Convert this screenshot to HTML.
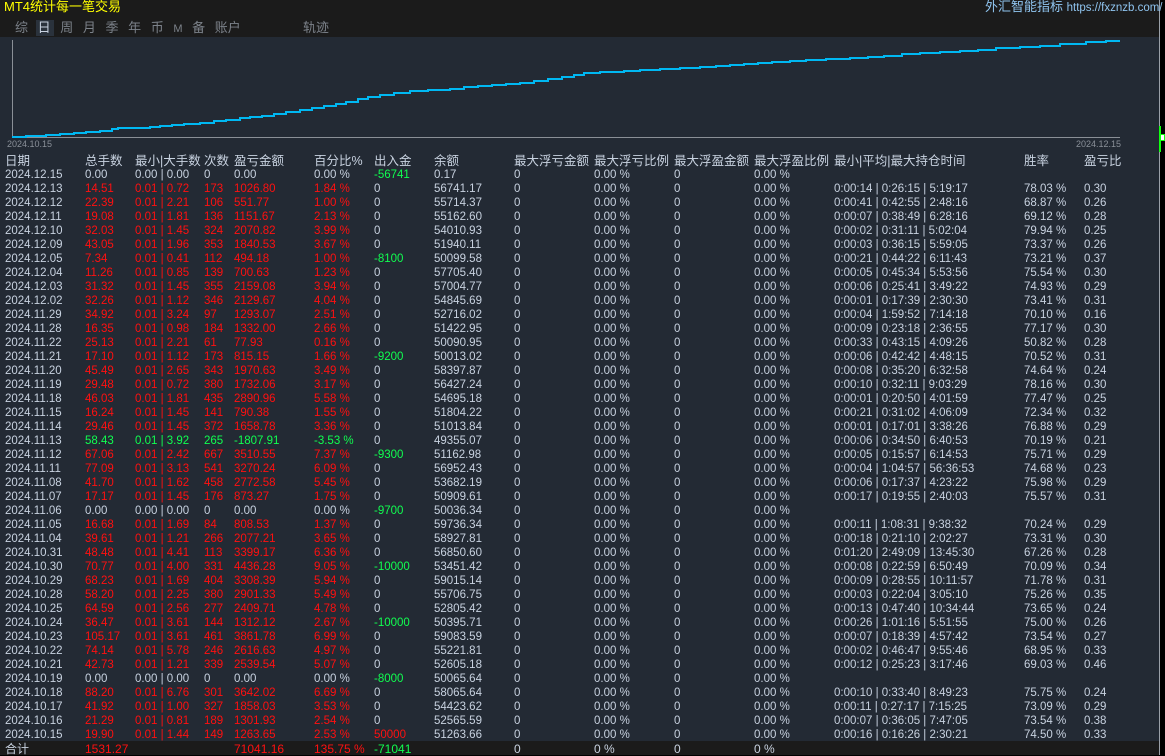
<!DOCTYPE html>
<html><head><meta charset="utf-8"><style>
body{margin:0;width:1165px;height:755px;background:#000;overflow:hidden;font-family:"Liberation Sans","Noto Sans CJK SC",sans-serif;}
#top{position:absolute;left:0;top:0;width:1159px;height:37px;background:#1b1b1b;}
#main{position:absolute;left:0;top:37px;width:1159px;height:708px;background:#232a34;}
#foot{position:absolute;left:0;top:741px;width:1159px;height:14px;background:#1b1b1b;}
#vl{position:absolute;left:1159px;top:0;width:1px;height:755px;background:#9aa0a8;}
.t{position:absolute;white-space:nowrap;font-size:12px;line-height:14px;color:#c8d2e0;}
.r{position:absolute;left:0;height:14px;width:1159px;font-size:11.5px;line-height:14px;color:#c8d2e0;}
.r span{position:absolute;white-space:nowrap;top:0}
.red span.c{color:#ff1010}
.grn span.c{color:#10ff50}
.g{color:#10ff50!important}.rd{color:#ff1010!important}
.a{left:5px}.b{left:85px}.c1{left:135px}.d{left:204px}.e{left:234px}.f{left:314px}.g1{left:374px}.h{left:434px}.i{left:514px}.j{left:594px}.k{left:674px}.l{left:754px}.m{left:834px}.n{left:1024px}.o{left:1084px}
</style></head><body>
<div id="top"></div><div id="main"></div><div id="foot"></div><div id="vl"></div>
<div style="position:absolute;left:1159px;top:126px;width:2px;height:26px;background:#10ff10"></div>
<div style="position:absolute;left:1160px;top:134px;width:3px;height:5px;background:#fff;border:1px solid #10ff10"></div>
<div class="t" style="left:4px;top:0;color:#ffff00;font-size:13px">MT4统计每一笔交易</div>
<div class="t" style="left:985px;top:0;color:#8fc4ef;font-size:13px">外汇智能指标 <span style="font-size:11.5px">https://fxznzb.com/</span></div>
<div style="position:absolute;left:36px;top:20px;width:18px;height:16px;background:#2a323c"></div>
<div class="t" style="left:15px;top:21px;color:#7c828a;font-size:13px;word-spacing:6px">综 <span style="color:#c8d2e0">日</span> 周 月 季 年 币 <span style="font-size:11px">M</span> 备 账户</div>
<div class="t" style="left:303px;top:21px;color:#7c828a;font-size:13px">轨迹</div>
<svg style="position:absolute;left:0;top:37px" width="1159" height="120">
<line x1="12.5" y1="3" x2="12.5" y2="100" stroke="#8a8f96"/>
<line x1="12" y1="100.5" x2="1120" y2="100.5" stroke="#8a8f96"/>
<polyline fill="none" stroke="#00b8f2" stroke-width="2" points="12,100 26,100 26,99 46,99 46,98 60,98 60,97 74,97 74,96 86,96 86,95 100,95 100,94 112,94 112,92 118,92 118,91 150,91 150,90 160,90 160,89 172,89 172,88 184,88 184,87 200,87 200,86 214,86 214,84 226,84 226,83 240,83 240,81 250,81 250,80 262,80 262,79 274,79 274,77 286,77 286,75 300,75 300,73 312,73 312,71 324,71 324,69 336,69 336,67 346,67 346,65 358,65 358,62 368,62 368,60 380,60 380,58 394,58 394,56 410,56 410,54 428,54 428,53 450,53 450,52 464,52 464,50 478,50 478,49 492,49 492,48 506,48 506,47 520,47 520,46 534,46 534,44 548,44 548,42 562,42 562,40 574,40 574,38 584,38 584,36 600,36 600,35 624,35 624,34 640,34 640,33 660,33 660,32 680,32 680,31 700,31 700,30 716,30 716,29 730,29 730,28 744,28 744,27 758,27 758,26 772,26 772,25 790,25 790,24 806,24 806,23 826,23 826,22 850,22 850,21 868,21 868,20 884,20 884,19 902,19 902,17 920,17 920,16 940,16 940,15 960,15 960,14 978,14 978,13 996,13 996,11 1020,11 1020,10 1040,10 1040,9 1060,9 1060,7 1086,7 1086,5 1106,5 1106,4 1120,4"/>
</svg>
<div class="t" style="left:7px;top:138px;font-size:9px;line-height:12px;color:#8a9099">2024.10.15</div>
<div class="t" style="left:1076px;top:138px;font-size:9px;line-height:12px;color:#8a9099">2024.12.15</div>
<div class="r" style="top:154px;font-size:12.5px"><span class="a">日期</span><span class="b">总手数</span><span class="c1">最小|大手数</span><span class="d">次数</span><span class="e">盈亏金额</span><span class="f">百分比%</span><span class="g1">出入金</span><span class="h">余额</span><span class="i">最大浮亏金额</span><span class="j">最大浮亏比例</span><span class="k">最大浮盈金额</span><span class="l">最大浮盈比例</span><span class="m">最小|平均|最大持仓时间</span><span class="n">胜率</span><span class="o">盈亏比</span></div>
<div class="r" style="top:168px"><span class="a">2024.12.15</span><span class="b">0.00</span><span class="c1">0.00 | 0.00</span><span class="d">0</span><span class="e">0.00</span><span class="f">0.00 %</span><span class="g1 g">-56741</span><span class="h">0.17</span><span class="i">0</span><span class="j">0.00 %</span><span class="k">0</span><span class="l">0.00 %</span></div>
<div class="r red" style="top:182px"><span class="a">2024.12.13</span><span class="b c">14.51</span><span class="c1 c">0.01 | 0.72</span><span class="d c">173</span><span class="e c">1026.80</span><span class="f c">1.84 %</span><span class="g1">0</span><span class="h">56741.17</span><span class="i">0</span><span class="j">0.00 %</span><span class="k">0</span><span class="l">0.00 %</span><span class="m">0:00:14 | 0:26:15 | 5:19:17</span><span class="n">78.03 %</span><span class="o">0.30</span></div>
<div class="r red" style="top:196px"><span class="a">2024.12.12</span><span class="b c">22.39</span><span class="c1 c">0.01 | 2.21</span><span class="d c">106</span><span class="e c">551.77</span><span class="f c">1.00 %</span><span class="g1">0</span><span class="h">55714.37</span><span class="i">0</span><span class="j">0.00 %</span><span class="k">0</span><span class="l">0.00 %</span><span class="m">0:00:41 | 0:42:55 | 2:48:16</span><span class="n">68.87 %</span><span class="o">0.26</span></div>
<div class="r red" style="top:210px"><span class="a">2024.12.11</span><span class="b c">19.08</span><span class="c1 c">0.01 | 1.81</span><span class="d c">136</span><span class="e c">1151.67</span><span class="f c">2.13 %</span><span class="g1">0</span><span class="h">55162.60</span><span class="i">0</span><span class="j">0.00 %</span><span class="k">0</span><span class="l">0.00 %</span><span class="m">0:00:07 | 0:38:49 | 6:28:16</span><span class="n">69.12 %</span><span class="o">0.28</span></div>
<div class="r red" style="top:224px"><span class="a">2024.12.10</span><span class="b c">32.03</span><span class="c1 c">0.01 | 1.45</span><span class="d c">324</span><span class="e c">2070.82</span><span class="f c">3.99 %</span><span class="g1">0</span><span class="h">54010.93</span><span class="i">0</span><span class="j">0.00 %</span><span class="k">0</span><span class="l">0.00 %</span><span class="m">0:00:02 | 0:31:11 | 5:02:04</span><span class="n">79.94 %</span><span class="o">0.25</span></div>
<div class="r red" style="top:238px"><span class="a">2024.12.09</span><span class="b c">43.05</span><span class="c1 c">0.01 | 1.96</span><span class="d c">353</span><span class="e c">1840.53</span><span class="f c">3.67 %</span><span class="g1">0</span><span class="h">51940.11</span><span class="i">0</span><span class="j">0.00 %</span><span class="k">0</span><span class="l">0.00 %</span><span class="m">0:00:03 | 0:36:15 | 5:59:05</span><span class="n">73.37 %</span><span class="o">0.26</span></div>
<div class="r red" style="top:252px"><span class="a">2024.12.05</span><span class="b c">7.34</span><span class="c1 c">0.01 | 0.41</span><span class="d c">112</span><span class="e c">494.18</span><span class="f c">1.00 %</span><span class="g1 g">-8100</span><span class="h">50099.58</span><span class="i">0</span><span class="j">0.00 %</span><span class="k">0</span><span class="l">0.00 %</span><span class="m">0:00:21 | 0:44:22 | 6:11:43</span><span class="n">73.21 %</span><span class="o">0.37</span></div>
<div class="r red" style="top:266px"><span class="a">2024.12.04</span><span class="b c">11.26</span><span class="c1 c">0.01 | 0.85</span><span class="d c">139</span><span class="e c">700.63</span><span class="f c">1.23 %</span><span class="g1">0</span><span class="h">57705.40</span><span class="i">0</span><span class="j">0.00 %</span><span class="k">0</span><span class="l">0.00 %</span><span class="m">0:00:05 | 0:45:34 | 5:53:56</span><span class="n">75.54 %</span><span class="o">0.30</span></div>
<div class="r red" style="top:280px"><span class="a">2024.12.03</span><span class="b c">31.32</span><span class="c1 c">0.01 | 1.45</span><span class="d c">355</span><span class="e c">2159.08</span><span class="f c">3.94 %</span><span class="g1">0</span><span class="h">57004.77</span><span class="i">0</span><span class="j">0.00 %</span><span class="k">0</span><span class="l">0.00 %</span><span class="m">0:00:06 | 0:25:41 | 3:49:22</span><span class="n">74.93 %</span><span class="o">0.29</span></div>
<div class="r red" style="top:294px"><span class="a">2024.12.02</span><span class="b c">32.26</span><span class="c1 c">0.01 | 1.12</span><span class="d c">346</span><span class="e c">2129.67</span><span class="f c">4.04 %</span><span class="g1">0</span><span class="h">54845.69</span><span class="i">0</span><span class="j">0.00 %</span><span class="k">0</span><span class="l">0.00 %</span><span class="m">0:00:01 | 0:17:39 | 2:30:30</span><span class="n">73.41 %</span><span class="o">0.31</span></div>
<div class="r red" style="top:308px"><span class="a">2024.11.29</span><span class="b c">34.92</span><span class="c1 c">0.01 | 3.24</span><span class="d c">97</span><span class="e c">1293.07</span><span class="f c">2.51 %</span><span class="g1">0</span><span class="h">52716.02</span><span class="i">0</span><span class="j">0.00 %</span><span class="k">0</span><span class="l">0.00 %</span><span class="m">0:00:04 | 1:59:52 | 7:14:18</span><span class="n">70.10 %</span><span class="o">0.16</span></div>
<div class="r red" style="top:322px"><span class="a">2024.11.28</span><span class="b c">16.35</span><span class="c1 c">0.01 | 0.98</span><span class="d c">184</span><span class="e c">1332.00</span><span class="f c">2.66 %</span><span class="g1">0</span><span class="h">51422.95</span><span class="i">0</span><span class="j">0.00 %</span><span class="k">0</span><span class="l">0.00 %</span><span class="m">0:00:09 | 0:23:18 | 2:36:55</span><span class="n">77.17 %</span><span class="o">0.30</span></div>
<div class="r red" style="top:336px"><span class="a">2024.11.22</span><span class="b c">25.13</span><span class="c1 c">0.01 | 2.21</span><span class="d c">61</span><span class="e c">77.93</span><span class="f c">0.16 %</span><span class="g1">0</span><span class="h">50090.95</span><span class="i">0</span><span class="j">0.00 %</span><span class="k">0</span><span class="l">0.00 %</span><span class="m">0:00:33 | 0:43:15 | 4:09:26</span><span class="n">50.82 %</span><span class="o">0.28</span></div>
<div class="r red" style="top:350px"><span class="a">2024.11.21</span><span class="b c">17.10</span><span class="c1 c">0.01 | 1.12</span><span class="d c">173</span><span class="e c">815.15</span><span class="f c">1.66 %</span><span class="g1 g">-9200</span><span class="h">50013.02</span><span class="i">0</span><span class="j">0.00 %</span><span class="k">0</span><span class="l">0.00 %</span><span class="m">0:00:06 | 0:42:42 | 4:48:15</span><span class="n">70.52 %</span><span class="o">0.31</span></div>
<div class="r red" style="top:364px"><span class="a">2024.11.20</span><span class="b c">45.49</span><span class="c1 c">0.01 | 2.65</span><span class="d c">343</span><span class="e c">1970.63</span><span class="f c">3.49 %</span><span class="g1">0</span><span class="h">58397.87</span><span class="i">0</span><span class="j">0.00 %</span><span class="k">0</span><span class="l">0.00 %</span><span class="m">0:00:08 | 0:35:20 | 6:32:58</span><span class="n">74.64 %</span><span class="o">0.24</span></div>
<div class="r red" style="top:378px"><span class="a">2024.11.19</span><span class="b c">29.48</span><span class="c1 c">0.01 | 0.72</span><span class="d c">380</span><span class="e c">1732.06</span><span class="f c">3.17 %</span><span class="g1">0</span><span class="h">56427.24</span><span class="i">0</span><span class="j">0.00 %</span><span class="k">0</span><span class="l">0.00 %</span><span class="m">0:00:10 | 0:32:11 | 9:03:29</span><span class="n">78.16 %</span><span class="o">0.30</span></div>
<div class="r red" style="top:392px"><span class="a">2024.11.18</span><span class="b c">46.03</span><span class="c1 c">0.01 | 1.81</span><span class="d c">435</span><span class="e c">2890.96</span><span class="f c">5.58 %</span><span class="g1">0</span><span class="h">54695.18</span><span class="i">0</span><span class="j">0.00 %</span><span class="k">0</span><span class="l">0.00 %</span><span class="m">0:00:01 | 0:20:50 | 4:01:59</span><span class="n">77.47 %</span><span class="o">0.25</span></div>
<div class="r red" style="top:406px"><span class="a">2024.11.15</span><span class="b c">16.24</span><span class="c1 c">0.01 | 1.45</span><span class="d c">141</span><span class="e c">790.38</span><span class="f c">1.55 %</span><span class="g1">0</span><span class="h">51804.22</span><span class="i">0</span><span class="j">0.00 %</span><span class="k">0</span><span class="l">0.00 %</span><span class="m">0:00:21 | 0:31:02 | 4:06:09</span><span class="n">72.34 %</span><span class="o">0.32</span></div>
<div class="r red" style="top:420px"><span class="a">2024.11.14</span><span class="b c">29.46</span><span class="c1 c">0.01 | 1.45</span><span class="d c">372</span><span class="e c">1658.78</span><span class="f c">3.36 %</span><span class="g1">0</span><span class="h">51013.84</span><span class="i">0</span><span class="j">0.00 %</span><span class="k">0</span><span class="l">0.00 %</span><span class="m">0:00:01 | 0:17:01 | 3:38:26</span><span class="n">76.88 %</span><span class="o">0.29</span></div>
<div class="r grn" style="top:434px"><span class="a">2024.11.13</span><span class="b c">58.43</span><span class="c1 c">0.01 | 3.92</span><span class="d c">265</span><span class="e c">-1807.91</span><span class="f c">-3.53 %</span><span class="g1">0</span><span class="h">49355.07</span><span class="i">0</span><span class="j">0.00 %</span><span class="k">0</span><span class="l">0.00 %</span><span class="m">0:00:06 | 0:34:50 | 6:40:53</span><span class="n">70.19 %</span><span class="o">0.21</span></div>
<div class="r red" style="top:448px"><span class="a">2024.11.12</span><span class="b c">67.06</span><span class="c1 c">0.01 | 2.42</span><span class="d c">667</span><span class="e c">3510.55</span><span class="f c">7.37 %</span><span class="g1 g">-9300</span><span class="h">51162.98</span><span class="i">0</span><span class="j">0.00 %</span><span class="k">0</span><span class="l">0.00 %</span><span class="m">0:00:05 | 0:15:57 | 6:14:53</span><span class="n">75.71 %</span><span class="o">0.29</span></div>
<div class="r red" style="top:462px"><span class="a">2024.11.11</span><span class="b c">77.09</span><span class="c1 c">0.01 | 3.13</span><span class="d c">541</span><span class="e c">3270.24</span><span class="f c">6.09 %</span><span class="g1">0</span><span class="h">56952.43</span><span class="i">0</span><span class="j">0.00 %</span><span class="k">0</span><span class="l">0.00 %</span><span class="m">0:00:04 | 1:04:57 | 56:36:53</span><span class="n">74.68 %</span><span class="o">0.23</span></div>
<div class="r red" style="top:476px"><span class="a">2024.11.08</span><span class="b c">41.70</span><span class="c1 c">0.01 | 1.62</span><span class="d c">458</span><span class="e c">2772.58</span><span class="f c">5.45 %</span><span class="g1">0</span><span class="h">53682.19</span><span class="i">0</span><span class="j">0.00 %</span><span class="k">0</span><span class="l">0.00 %</span><span class="m">0:00:06 | 0:17:37 | 4:23:22</span><span class="n">75.98 %</span><span class="o">0.29</span></div>
<div class="r red" style="top:490px"><span class="a">2024.11.07</span><span class="b c">17.17</span><span class="c1 c">0.01 | 1.45</span><span class="d c">176</span><span class="e c">873.27</span><span class="f c">1.75 %</span><span class="g1">0</span><span class="h">50909.61</span><span class="i">0</span><span class="j">0.00 %</span><span class="k">0</span><span class="l">0.00 %</span><span class="m">0:00:17 | 0:19:55 | 2:40:03</span><span class="n">75.57 %</span><span class="o">0.31</span></div>
<div class="r" style="top:504px"><span class="a">2024.11.06</span><span class="b">0.00</span><span class="c1">0.00 | 0.00</span><span class="d">0</span><span class="e">0.00</span><span class="f">0.00 %</span><span class="g1 g">-9700</span><span class="h">50036.34</span><span class="i">0</span><span class="j">0.00 %</span><span class="k">0</span><span class="l">0.00 %</span></div>
<div class="r red" style="top:518px"><span class="a">2024.11.05</span><span class="b c">16.68</span><span class="c1 c">0.01 | 1.69</span><span class="d c">84</span><span class="e c">808.53</span><span class="f c">1.37 %</span><span class="g1">0</span><span class="h">59736.34</span><span class="i">0</span><span class="j">0.00 %</span><span class="k">0</span><span class="l">0.00 %</span><span class="m">0:00:11 | 1:08:31 | 9:38:32</span><span class="n">70.24 %</span><span class="o">0.29</span></div>
<div class="r red" style="top:532px"><span class="a">2024.11.04</span><span class="b c">39.61</span><span class="c1 c">0.01 | 1.21</span><span class="d c">266</span><span class="e c">2077.21</span><span class="f c">3.65 %</span><span class="g1">0</span><span class="h">58927.81</span><span class="i">0</span><span class="j">0.00 %</span><span class="k">0</span><span class="l">0.00 %</span><span class="m">0:00:18 | 0:21:10 | 2:02:27</span><span class="n">73.31 %</span><span class="o">0.30</span></div>
<div class="r red" style="top:546px"><span class="a">2024.10.31</span><span class="b c">48.48</span><span class="c1 c">0.01 | 4.41</span><span class="d c">113</span><span class="e c">3399.17</span><span class="f c">6.36 %</span><span class="g1">0</span><span class="h">56850.60</span><span class="i">0</span><span class="j">0.00 %</span><span class="k">0</span><span class="l">0.00 %</span><span class="m">0:01:20 | 2:49:09 | 13:45:30</span><span class="n">67.26 %</span><span class="o">0.28</span></div>
<div class="r red" style="top:560px"><span class="a">2024.10.30</span><span class="b c">70.77</span><span class="c1 c">0.01 | 4.00</span><span class="d c">331</span><span class="e c">4436.28</span><span class="f c">9.05 %</span><span class="g1 g">-10000</span><span class="h">53451.42</span><span class="i">0</span><span class="j">0.00 %</span><span class="k">0</span><span class="l">0.00 %</span><span class="m">0:00:08 | 0:22:59 | 6:50:49</span><span class="n">70.09 %</span><span class="o">0.34</span></div>
<div class="r red" style="top:574px"><span class="a">2024.10.29</span><span class="b c">68.23</span><span class="c1 c">0.01 | 1.69</span><span class="d c">404</span><span class="e c">3308.39</span><span class="f c">5.94 %</span><span class="g1">0</span><span class="h">59015.14</span><span class="i">0</span><span class="j">0.00 %</span><span class="k">0</span><span class="l">0.00 %</span><span class="m">0:00:09 | 0:28:55 | 10:11:57</span><span class="n">71.78 %</span><span class="o">0.31</span></div>
<div class="r red" style="top:588px"><span class="a">2024.10.28</span><span class="b c">58.20</span><span class="c1 c">0.01 | 2.25</span><span class="d c">380</span><span class="e c">2901.33</span><span class="f c">5.49 %</span><span class="g1">0</span><span class="h">55706.75</span><span class="i">0</span><span class="j">0.00 %</span><span class="k">0</span><span class="l">0.00 %</span><span class="m">0:00:03 | 0:22:04 | 3:05:10</span><span class="n">75.26 %</span><span class="o">0.35</span></div>
<div class="r red" style="top:602px"><span class="a">2024.10.25</span><span class="b c">64.59</span><span class="c1 c">0.01 | 2.56</span><span class="d c">277</span><span class="e c">2409.71</span><span class="f c">4.78 %</span><span class="g1">0</span><span class="h">52805.42</span><span class="i">0</span><span class="j">0.00 %</span><span class="k">0</span><span class="l">0.00 %</span><span class="m">0:00:13 | 0:47:40 | 10:34:44</span><span class="n">73.65 %</span><span class="o">0.24</span></div>
<div class="r red" style="top:616px"><span class="a">2024.10.24</span><span class="b c">36.47</span><span class="c1 c">0.01 | 3.61</span><span class="d c">144</span><span class="e c">1312.12</span><span class="f c">2.67 %</span><span class="g1 g">-10000</span><span class="h">50395.71</span><span class="i">0</span><span class="j">0.00 %</span><span class="k">0</span><span class="l">0.00 %</span><span class="m">0:00:26 | 1:01:16 | 5:51:55</span><span class="n">75.00 %</span><span class="o">0.26</span></div>
<div class="r red" style="top:630px"><span class="a">2024.10.23</span><span class="b c">105.17</span><span class="c1 c">0.01 | 3.61</span><span class="d c">461</span><span class="e c">3861.78</span><span class="f c">6.99 %</span><span class="g1">0</span><span class="h">59083.59</span><span class="i">0</span><span class="j">0.00 %</span><span class="k">0</span><span class="l">0.00 %</span><span class="m">0:00:07 | 0:18:39 | 4:57:42</span><span class="n">73.54 %</span><span class="o">0.27</span></div>
<div class="r red" style="top:644px"><span class="a">2024.10.22</span><span class="b c">74.14</span><span class="c1 c">0.01 | 5.78</span><span class="d c">246</span><span class="e c">2616.63</span><span class="f c">4.97 %</span><span class="g1">0</span><span class="h">55221.81</span><span class="i">0</span><span class="j">0.00 %</span><span class="k">0</span><span class="l">0.00 %</span><span class="m">0:00:02 | 0:46:47 | 9:55:46</span><span class="n">68.95 %</span><span class="o">0.33</span></div>
<div class="r red" style="top:658px"><span class="a">2024.10.21</span><span class="b c">42.73</span><span class="c1 c">0.01 | 1.21</span><span class="d c">339</span><span class="e c">2539.54</span><span class="f c">5.07 %</span><span class="g1">0</span><span class="h">52605.18</span><span class="i">0</span><span class="j">0.00 %</span><span class="k">0</span><span class="l">0.00 %</span><span class="m">0:00:12 | 0:25:23 | 3:17:46</span><span class="n">69.03 %</span><span class="o">0.46</span></div>
<div class="r" style="top:672px"><span class="a">2024.10.19</span><span class="b">0.00</span><span class="c1">0.00 | 0.00</span><span class="d">0</span><span class="e">0.00</span><span class="f">0.00 %</span><span class="g1 g">-8000</span><span class="h">50065.64</span><span class="i">0</span><span class="j">0.00 %</span><span class="k">0</span><span class="l">0.00 %</span></div>
<div class="r red" style="top:686px"><span class="a">2024.10.18</span><span class="b c">88.20</span><span class="c1 c">0.01 | 6.76</span><span class="d c">301</span><span class="e c">3642.02</span><span class="f c">6.69 %</span><span class="g1">0</span><span class="h">58065.64</span><span class="i">0</span><span class="j">0.00 %</span><span class="k">0</span><span class="l">0.00 %</span><span class="m">0:00:10 | 0:33:40 | 8:49:23</span><span class="n">75.75 %</span><span class="o">0.24</span></div>
<div class="r red" style="top:700px"><span class="a">2024.10.17</span><span class="b c">41.92</span><span class="c1 c">0.01 | 1.00</span><span class="d c">327</span><span class="e c">1858.03</span><span class="f c">3.53 %</span><span class="g1">0</span><span class="h">54423.62</span><span class="i">0</span><span class="j">0.00 %</span><span class="k">0</span><span class="l">0.00 %</span><span class="m">0:00:11 | 0:27:17 | 7:15:25</span><span class="n">73.09 %</span><span class="o">0.29</span></div>
<div class="r red" style="top:714px"><span class="a">2024.10.16</span><span class="b c">21.29</span><span class="c1 c">0.01 | 0.81</span><span class="d c">189</span><span class="e c">1301.93</span><span class="f c">2.54 %</span><span class="g1">0</span><span class="h">52565.59</span><span class="i">0</span><span class="j">0.00 %</span><span class="k">0</span><span class="l">0.00 %</span><span class="m">0:00:07 | 0:36:05 | 7:47:05</span><span class="n">73.54 %</span><span class="o">0.38</span></div>
<div class="r red" style="top:728px"><span class="a">2024.10.15</span><span class="b c">19.90</span><span class="c1 c">0.01 | 1.44</span><span class="d c">149</span><span class="e c">1263.65</span><span class="f c">2.53 %</span><span class="g1 c">50000</span><span class="h">51263.66</span><span class="i">0</span><span class="j">0.00 %</span><span class="k">0</span><span class="l">0.00 %</span><span class="m">0:00:16 | 0:16:26 | 2:30:21</span><span class="n">74.50 %</span><span class="o">0.33</span></div>
<div class="r red" style="top:742px;font-size:12px"><span class="a">合计</span><span class="b c">1531.27</span><span class="e c">71041.16</span><span class="f c">135.75 %</span><span class="g1 g">-71041</span><span class="i">0</span><span class="j">0 %</span><span class="k">0</span><span class="l">0 %</span></div>
</body></html>
